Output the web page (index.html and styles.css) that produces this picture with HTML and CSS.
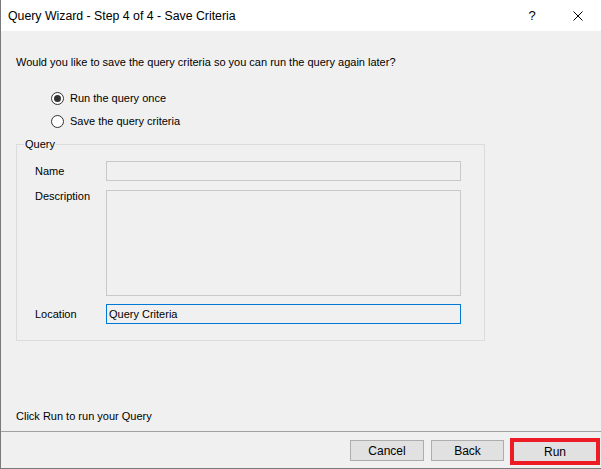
FILE: index.html
```html
<!DOCTYPE html>
<html>
<head>
<meta charset="utf-8">
<link rel="stylesheet" href="styles.css">
</head>
<body>
<div class="window">
  <div class="titlebar">
    <span class="title">Query Wizard - Step 4 of 4 - Save Criteria</span>
    <span class="caption-btn help">?</span>
    <span class="caption-btn close">
      <svg width="10" height="10" viewBox="0 0 10 10"><path d="M0.5 0.5 L9.5 9.5 M9.5 0.5 L0.5 9.5" stroke="#000" stroke-width="1" fill="none"/></svg>
    </span>
  </div>
  <div class="content">
    <p class="question">Would you like to save the query criteria so you can run the query again later?</p>
    <div class="radios">
      <label class="radio-row"><span class="radio checked"></span><span>Run the query once</span></label>
      <label class="radio-row"><span class="radio"></span><span>Save the query criteria</span></label>
    </div>
    <fieldset class="group">
      <legend class="group-title">Query</legend>
      <div class="form-grid">
        <span class="lbl lbl-center">Name</span>
        <div class="field field-name"></div>
        <span class="lbl lbl-top">Description</span>
        <div class="field field-desc"></div>
        <span class="lbl lbl-center">Location</span>
        <div class="field field-loc">Query Criteria</div>
      </div>
    </fieldset>
    <p class="hint">Click Run to run your Query</p>
  </div>
  <div class="buttonbar">
    <button class="btn">Cancel</button>
    <button class="btn btn-back">Back</button>
    <span class="highlight"><button class="btn btn-run">Run</button></span>
  </div>
</div>
</body>
</html>
```

FILE: styles.css
```css
* { box-sizing: border-box; }
html, body { margin: 0; padding: 0; background: #f0f0f0; }
body { width: 601px; height: 469px; overflow: hidden; }

.window {
  width: 601px;
  height: 469px;
  display: flex;
  flex-direction: column;
  border-left: 1px solid #7a7a7a;
  border-bottom: 1px solid #7a7a7a;
  background: #f0f0f0;
  font-family: "Liberation Sans", Arial, sans-serif;
  font-size: 11px;
  color: #000;
}

.titlebar {
  height: 31px;
  flex: none;
  background: #fff;
  display: flex;
  align-items: center;
  padding-left: 7px;
}
.title {
  font-family: "Liberation Sans", Arial, sans-serif;
  font-size: 12.3px;
  color: #000;
  flex: 1;
  margin-top: 1px;
}
.caption-btn {
  width: 46px;
  height: 31px;
  display: flex;
  align-items: center;
  justify-content: center;
}
.help { font-size: 13px; font-family: "Liberation Sans", Arial, sans-serif; }
.close svg { display: block; }

.content {
  flex: 1;
  display: flex;
  flex-direction: column;
  padding-left: 15px;
}
.question {
  margin: 25px 0 0;
  line-height: 13px;
}
.radios {
  margin-top: 18px;
  padding-left: 35px;
  display: flex;
  flex-direction: column;
}
.radio-row {
  height: 23px;
  display: flex;
  align-items: center;
  gap: 6px;
  line-height: 13px;
}
.radio {
  width: 13px;
  height: 13px;
  border-radius: 50%;
  border: 1px solid #333;
  background: #fff;
  display: flex;
  align-items: center;
  justify-content: center;
}
.radio.checked::after {
  content: "";
  width: 7px;
  height: 7px;
  border-radius: 50%;
  background: #333;
}

.group {
  margin: 5px 0 0;
  width: 469px;
  padding: 10px 0 16px 18px;
  border: 1px solid #dcdcdc;
}
.group-title {
  margin-left: -11px;
  padding: 0 1px;
  line-height: 13px;
}
.form-grid {
  display: grid;
  grid-template-columns: 71px 355px;
  grid-template-rows: 20px 105px 20px;
  row-gap: 9px;
}
.form-grid .field-desc { margin-bottom: -1px; }
.lbl { line-height: 13px; }
.lbl-center { align-self: center; }
.lbl-top { align-self: start; }
.field {
  border: 1px solid #c8c8c8;
  background: #f0f0f0;
}
.field-loc {
  border-color: #0078d7;
  padding-left: 2px;
  line-height: 18px;
}

.hint {
  margin: auto 0 8px;
  line-height: 13px;
}

.buttonbar {
  flex: none;
  height: 37px;
  border-top: 1px solid #a0a0a0;
  display: flex;
  justify-content: flex-end;
  align-items: flex-start;
  padding: 8px 1px 0 0;
  gap: 7px;
}
.btn {
  width: 74px;
  height: 21px;
  background: #e1e1e1;
  border: 1px solid #adadad;
  font-family: "Liberation Sans", Arial, sans-serif;
  font-size: 12px;
  color: #000;
  padding: 0;
  margin: 0;
}
.btn-back { width: 73px; }
.highlight {
  display: block;
  margin-top: -2px;
  margin-left: -1px;
  border: 4px solid #ed1c24;
}
.btn-run {
  display: block;
  width: 82px;
  height: 19px;
  border: none;
}
```
